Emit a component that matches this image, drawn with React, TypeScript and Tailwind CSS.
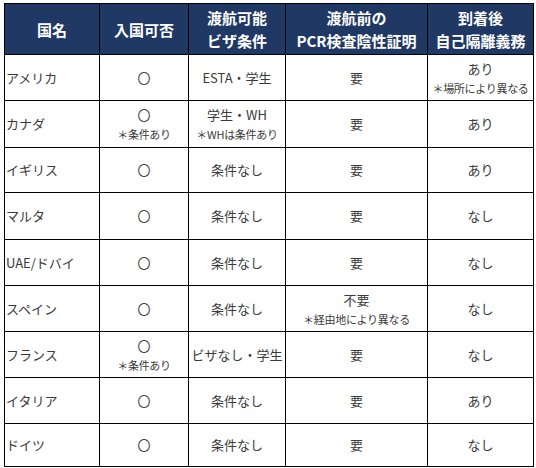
import React from "react";

type Cell = { main: string; note?: string };
type Row = { name: string; cells: Cell[] };

const rows: Row[] = [
  { name: "アメリカ", cells: [{ main: "〇" }, { main: "ESTA・学生" }, { main: "要" }, { main: "あり", note: "＊場所により異なる" }] },
  { name: "カナダ", cells: [{ main: "〇", note: "＊条件あり" }, { main: "学生・WH", note: "＊WHは条件あり" }, { main: "要" }, { main: "あり" }] },
  { name: "イギリス", cells: [{ main: "〇" }, { main: "条件なし" }, { main: "要" }, { main: "あり" }] },
  { name: "マルタ", cells: [{ main: "〇" }, { main: "条件なし" }, { main: "要" }, { main: "なし" }] },
  { name: "UAE/ドバイ", cells: [{ main: "〇" }, { main: "条件なし" }, { main: "要" }, { main: "なし" }] },
  { name: "スペイン", cells: [{ main: "〇" }, { main: "条件なし" }, { main: "不要", note: "＊経由地により異なる" }, { main: "なし" }] },
  { name: "フランス", cells: [{ main: "〇", note: "＊条件あり" }, { main: "ビザなし・学生" }, { main: "要" }, { main: "なし" }] },
  { name: "イタリア", cells: [{ main: "〇" }, { main: "条件なし" }, { main: "要" }, { main: "あり" }] },
  { name: "ドイツ", cells: [{ main: "〇" }, { main: "条件なし" }, { main: "要" }, { main: "なし" }] },
];

const heights = ["h-[45px]", "h-[46px]", "h-[44px]", "h-[46px]", "h-[45px]", "h-[45px]", "h-[45px]", "h-[45px]", "h-[42px]"];

export default function App() {
  return (
    <div className="w-[536px] h-[468px] bg-white pt-[3px] pl-[4px] overflow-hidden" style={{ fontFamily: '"Noto Sans CJK JP", "Noto Sans", sans-serif' }}>
      <div className="grid grid-cols-[94px_88px_96px_141px_105px] gap-px bg-black p-px w-[530px]">
        {[
          ["国名"],
          ["入国可否"],
          ["渡航可能", "ビザ条件"],
          ["渡航前の", "PCR検査陰性証明"],
          ["到着後", "自己隔離義務"],
        ].map((h, i) => (
          <div key={i} className="h-[50px] bg-[#1f3864] text-white font-bold text-[15px] leading-[23px] flex flex-col items-center justify-center">
            {h.map((t) => (
              <span key={t}>{t}</span>
            ))}
          </div>
        ))}
        {rows.map((r, ri) => (
          <React.Fragment key={r.name}>
            <div className={`${heights[ri]} bg-white text-[#3a3a3a] text-[13px] flex items-center pl-[1px] whitespace-nowrap`}>{r.name}</div>
            {r.cells.map((c, ci) => (
              <div key={ci} className={`${heights[ri]} bg-white text-[#3a3a3a] flex flex-col items-center justify-center whitespace-nowrap`}>
                <span className="text-[13px] leading-[20px]">{c.main}</span>
                {c.note && <span className="text-[11px] leading-[18px] tracking-[-0.3px]">{c.note}</span>}
              </div>
            ))}
          </React.Fragment>
        ))}
      </div>
    </div>
  );
}
